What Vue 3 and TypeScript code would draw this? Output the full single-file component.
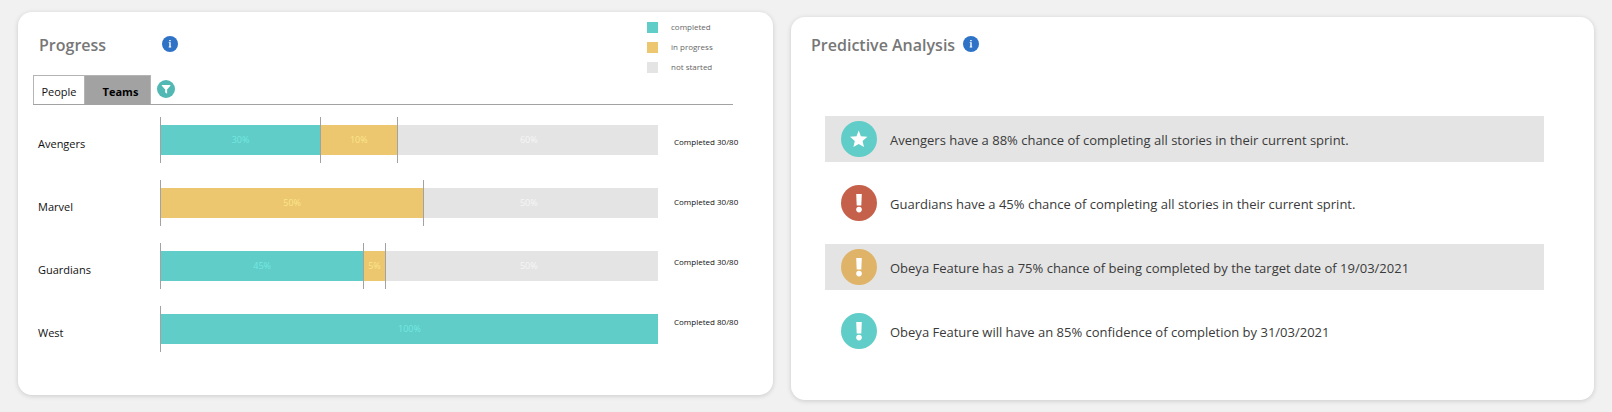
<script setup lang="ts">
import { ref } from 'vue'

type Status = 'completed' | 'progress' | 'pending'

interface Segment {
  status: Status
  label: string
  width: number
}

interface Team {
  name: string
  segments: Segment[]
  remaining: string
  count: string
}

interface Prediction {
  icon: 'star' | 'alert'
  tone: 'good' | 'bad' | 'warn'
  text: string
}

const legend: { status: Status; label: string }[] = [
  { status: 'completed', label: 'completed' },
  { status: 'progress', label: 'in progress' },
  { status: 'pending', label: 'not started' },
]

const teams: Team[] = [
  {
    name: 'Avengers',
    segments: [
      { status: 'completed', label: '30%', width: 32.2 },
      { status: 'progress', label: '10%', width: 15.4 },
    ],
    remaining: '60%',
    count: 'Completed 30/80',
  },
  {
    name: 'Marvel',
    segments: [{ status: 'progress', label: '50%', width: 53 }],
    remaining: '50%',
    count: 'Completed 30/80',
  },
  {
    name: 'Guardians',
    segments: [
      { status: 'completed', label: '45%', width: 40.9 },
      { status: 'progress', label: '5%', width: 4.3 },
    ],
    remaining: '50%',
    count: 'Completed 30/80',
  },
  {
    name: 'West',
    segments: [{ status: 'completed', label: '100%', width: 100 }],
    remaining: '',
    count: 'Completed 80/80',
  },
]

const predictions: Prediction[] = [
  { icon: 'star', tone: 'good', text: 'Avengers have a 88% chance of completing all stories in their current sprint.' },
  { icon: 'alert', tone: 'bad', text: 'Guardians have a 45% chance of completing all stories in their current sprint.' },
  { icon: 'alert', tone: 'warn', text: 'Obeya Feature has a 75% chance of being completed by the target date of 19/03/2021' },
  { icon: 'alert', tone: 'good', text: 'Obeya Feature will have an 85% confidence of completion by 31/03/2021' },
]

const view = ref<'people' | 'teams'>('teams')
</script>

<template>
  <main class="board">
    <section class="card" aria-labelledby="progress-title">
      <header class="head">
        <h2 id="progress-title" class="title progress-title">Progress</h2>
        <button type="button" class="info" aria-label="About progress">
          <svg viewBox="0 0 16 16" aria-hidden="true">
            <circle cx="8" cy="8" r="8" fill="#2f73c7" />
            <path d="M7.2 4h1.5v1.3H7.2zM6.7 6.3h2v4.3h.5v.8H6.7v-.8h.6V7.1h-.6z" fill="#fff" />
          </svg>
        </button>
        <ul class="legend">
          <li v-for="item in legend" :key="item.status">
            <span class="swatch" :class="item.status"></span>{{ item.label }}
          </li>
        </ul>
      </header>

      <div class="tabs">
        <button type="button" class="tab people" :class="{ active: view === 'people' }" @click="view = 'people'">People</button>
        <button type="button" class="tab teams" :class="{ active: view === 'teams' }" @click="view = 'teams'">Teams</button>
        <button type="button" class="filter" aria-label="Filter">
          <svg viewBox="0 0 18 18" aria-hidden="true">
            <circle cx="9" cy="9" r="9" fill="#52b8b3" />
            <path d="M4.8 4.9h8.6v.8L10.1 9.5v4.3L8.2 12.6V9.5L4.8 5.7z" fill="#fff" />
          </svg>
        </button>
      </div>

      <div class="chart">
        <ul class="rows">
          <li v-for="team in teams" :key="team.name" class="row">
            <span class="name">{{ team.name }}</span>
            <div class="track">
              <div
                v-for="segment in team.segments"
                :key="segment.status"
                class="segment"
                :class="{ full: segment.width === 100 }"
                :style="{ width: segment.width + '%' }"
              >
                <span class="fill" :class="segment.status">{{ segment.label }}</span>
              </div>
              <div v-if="team.remaining" class="segment rest"><span class="fill pending"></span></div>
              <span class="remaining">{{ team.remaining }}</span>
            </div>
          </li>
        </ul>
        <ul class="counts">
          <li v-for="team in teams" :key="team.name">{{ team.count }}</li>
        </ul>
      </div>
    </section>

    <section class="card analysis" aria-labelledby="analysis-title">
      <header class="head">
        <h2 id="analysis-title" class="title">Predictive Analysis</h2>
        <button type="button" class="info" aria-label="About predictive analysis">
          <svg viewBox="0 0 16 16" aria-hidden="true">
            <circle cx="8" cy="8" r="8" fill="#2f73c7" />
            <path d="M7.2 4h1.5v1.3H7.2zM6.7 6.3h2v4.3h.5v.8H6.7v-.8h.6V7.1h-.6z" fill="#fff" />
          </svg>
        </button>
      </header>
      <ul class="predictions">
        <li v-for="item in predictions" :key="item.text">
          <svg class="badge" :class="item.tone" viewBox="0 0 36 36" aria-hidden="true">
            <circle cx="18" cy="18" r="18" fill="currentColor" />
            <path
              v-if="item.icon === 'star'"
              d="M17.7 9.6l2.2 5.6 6.5.6-4.8 4.2 1.4 6-5.3-3.1-5.3 3.1 1.4-6L9 15.8l6.5-.6z"
              fill="#fff"
            />
            <template v-else>
              <path d="M15.2 9h5.6l-.5 11.4h-4.6z" fill="#fff" />
              <circle cx="18" cy="24.6" r="2.8" fill="#fff" />
            </template>
          </svg>
          <span class="message">{{ item.text }}</span>
        </li>
      </ul>
    </section>
  </main>
</template>

<style>
body {
  margin: 0;
  background: #f1f1f1;
}
</style>

<style scoped>
.board {
  box-sizing: border-box;
  min-height: 100vh;
  padding: 12px 18px;
  display: grid;
  grid-template-columns: 755fr 803fr;
  align-items: start;
  gap: 18px;
  font-family: "Open Sans", "Noto Sans", sans-serif;
  color: #111;
}

ul {
  list-style: none;
  margin: 0;
  padding: 0;
}

button {
  font: inherit;
  color: inherit;
  border: 0;
  padding: 0;
  background: none;
  cursor: pointer;
}

svg {
  display: block;
}

.card {
  box-sizing: border-box;
  padding-bottom: 43px;
  border-radius: 14px;
  background: #fff;
  box-shadow: 0 1px 5px rgba(0, 0, 0, 0.16);
}

.head {
  display: flex;
  align-items: flex-start;
  height: 63px;
  padding-left: 21px;
}

.title {
  margin: 20px 0 0;
  font-size: 16px;
  line-height: 26px;
  font-weight: 600;
  color: #777;
}

.progress-title {
  width: 123px;
}

.info {
  width: 16px;
  height: 16px;
  margin-top: 24px;
}

.info svg {
  width: 16px;
  height: 16px;
}

.legend {
  width: 126px;
  margin: 5px 0 0 auto;
  font-size: 8px;
  line-height: 20px;
  color: #666;
}

.legend li {
  display: flex;
  align-items: center;
  gap: 13px;
}

.swatch {
  width: 11px;
  height: 11px;
}

.completed {
  background: #60cdc8;
  color: #74e8e2;
}

.progress {
  background: #ecc76f;
  color: #fae68c;
}

.pending {
  background: #e4e4e4;
}

.tabs {
  display: flex;
  height: 29px;
  margin: 0 40px 0 15px;
  border-bottom: 1px solid #a2a2a2;
}

.tab {
  box-sizing: border-box;
  border: 1px solid #b4b4b4;
  border-bottom: 0;
  font-size: 11px;
  line-height: 28px;
  padding-top: 2px;
}

.people {
  width: 52px;
}

.teams {
  width: 66px;
  padding-left: 6px;
  border-left: 0;
}

.tab.active {
  background: #a2a2a2;
  font-weight: 700;
  color: #000;
}

.filter {
  width: 18px;
  height: 18px;
  margin: 5px 0 0 6px;
}

.filter svg {
  width: 18px;
  height: 18px;
}

.chart {
  display: grid;
  grid-template-columns: 1fr 99px;
  column-gap: 16px;
  padding: 12px 0 0 20px;
}

.rows {
  display: grid;
  row-gap: 17px;
}

.row {
  display: grid;
  grid-template-columns: 122px 1fr;
  align-items: center;
}

.name {
  padding-top: 8px;
  font-size: 11px;
  line-height: 16px;
}

.track {
  position: relative;
  display: flex;
  height: 46px;
  border-left: 1px solid #a2a2a2;
}

.segment {
  box-sizing: border-box;
  padding: 8px 0;
  border-right: 1px solid #a2a2a2;
}

.segment.rest {
  flex: 1;
}

.segment.rest,
.segment.full {
  border-right: 0;
}

.fill {
  display: block;
  height: 30px;
  text-align: center;
  font-size: 9px;
  line-height: 30px;
}

.remaining {
  position: absolute;
  top: 8px;
  right: 22%;
  width: 8%;
  text-align: center;
  font-size: 9px;
  line-height: 30px;
  color: #f6f6f6;
}

.counts {
  font-size: 8px;
  line-height: 16px;
  padding-top: 17px;
  display: flex;
  flex-direction: column;
  gap: 44px;
}

.analysis {
  margin-top: 5px;
  padding-bottom: 46px;
}

.analysis .head {
  height: 99px;
  padding-left: 20px;
  gap: 8px;
}

.analysis .title {
  margin-top: 15px;
}

.analysis .info {
  margin-top: 19px;
}

.predictions {
  display: grid;
  row-gap: 18px;
  margin: 0 50px 0 34px;
}

.predictions li {
  display: flex;
  align-items: center;
  gap: 13px;
  height: 46px;
  padding-left: 16px;
  font-size: 13px;
  line-height: 20px;
  color: #3a3a3a;
}

.predictions li:nth-child(odd) {
  background: #e4e4e4;
}

.badge {
  flex: none;
  width: 36px;
  height: 36px;
}

.message {
  padding-top: 2px;
}

.good {
  color: #60cdc8;
}

.bad {
  color: #c5604a;
}

.warn {
  color: #dfb469;
}
</style>
